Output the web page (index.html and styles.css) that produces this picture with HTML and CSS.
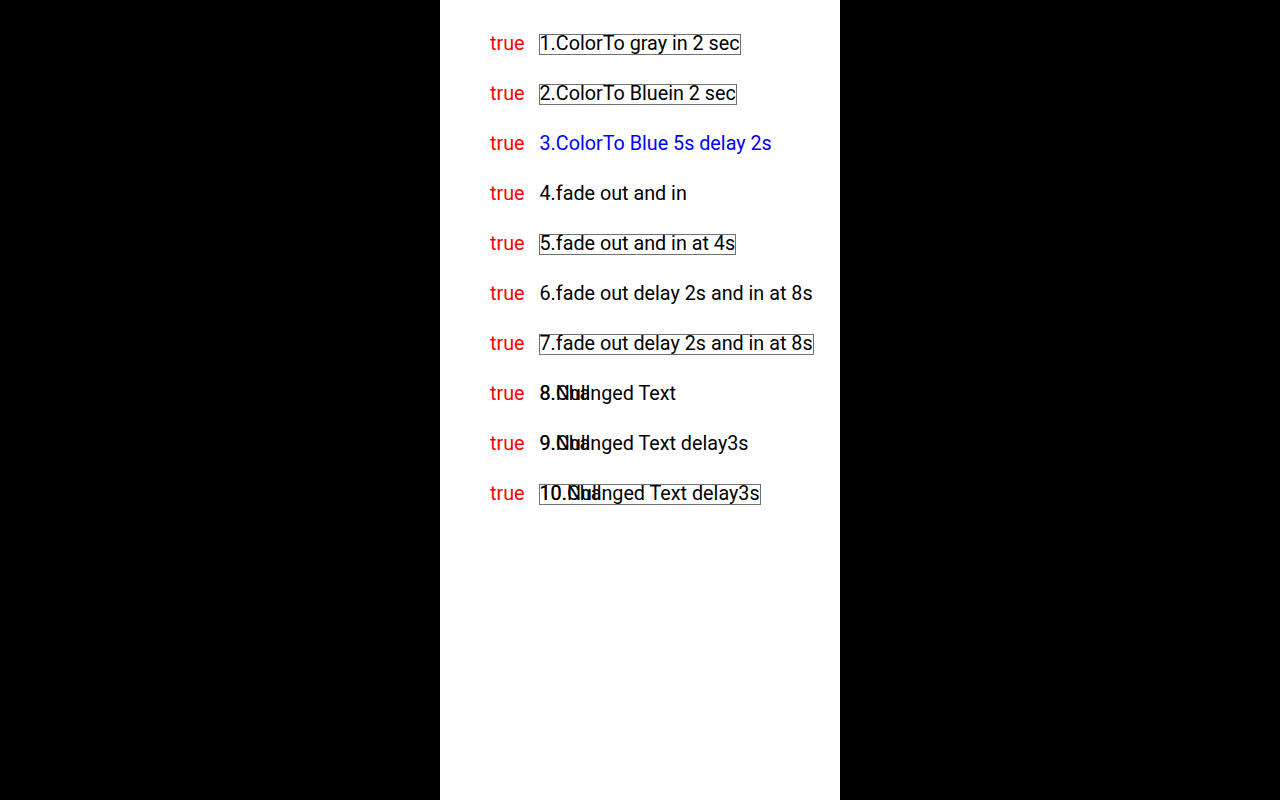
FILE: index.html
```html
<!DOCTYPE html>
<html>
<head>
<meta charset="utf-8">
<link rel="stylesheet" href="styles.css">
</head>
<body>
<div class="panel">
  <div class="row"><span class="flag">true</span><span class="label boxed">1.ColorTo gray in 2 sec</span></div>
  <div class="row"><span class="flag">true</span><span class="label boxed">2.ColorTo Bluein 2 sec</span></div>
  <div class="row"><span class="flag">true</span><span class="label blue">3.ColorTo Blue 5s delay 2s</span></div>
  <div class="row"><span class="flag">true</span><span class="label">4.fade out and in</span></div>
  <div class="row"><span class="flag">true</span><span class="label boxed">5.fade out and in at 4s</span></div>
  <div class="row"><span class="flag">true</span><span class="label">6.fade out delay 2s and in at 8s</span></div>
  <div class="row"><span class="flag">true</span><span class="label boxed">7.fade out delay 2s and in at 8s</span></div>
  <div class="row"><span class="flag">true</span><span class="label stack">8.Changed Text<span class="ghost">8.Null</span></span></div>
  <div class="row"><span class="flag">true</span><span class="label stack">9.Changed Text delay3s<span class="ghost">9.Null</span></span></div>
  <div class="row"><span class="flag">true</span><span class="label stack boxed">10.Changed Text delay3s<span class="ghost">10.Null</span></span></div>
</div>
</body>
</html>
```
FILE: styles.css
```css
html, body {
  margin: 0;
  padding: 0;
  background: #000;
  height: 100%;
}
body {
  display: flex;
  justify-content: center;
  font-family: Roboto, "Liberation Sans", sans-serif;
  font-size: 19.75px;
}
.panel {
  width: 400px;
  height: 800px;
  background: #fff;
  padding: 19px 0 0 50px;
  box-sizing: border-box;
  display: flex;
  flex-direction: column;
}
.row {
  height: 50px;
  display: flex;
  align-items: center;
}
.flag {
  width: 50px;
  color: #ff0000;
  line-height: 22px;
}
.label {
  color: #000;
  line-height: 17px;
  padding-bottom: 2px;
  border: 1.5px solid transparent;
  margin-left: -1.5px;
  white-space: nowrap;
}
.boxed {
  border-color: #707070;
}
.blue {
  color: #0000ff;
}
.stack {
  position: relative;
}
.ghost {
  position: absolute;
  left: 0;
  top: 0;
}
```
